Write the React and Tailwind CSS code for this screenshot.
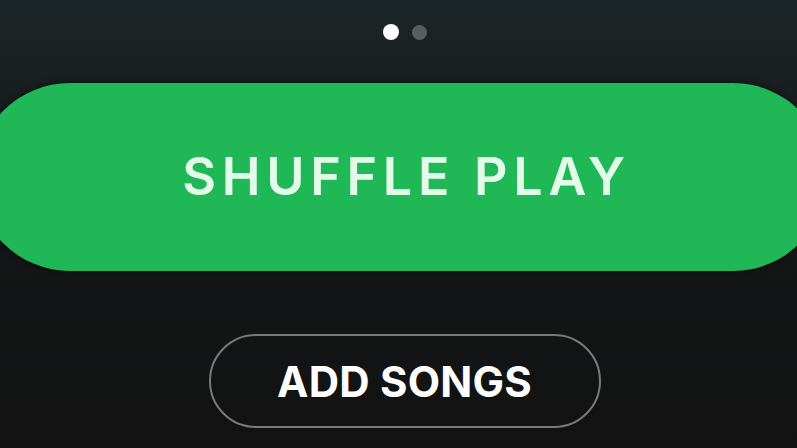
import React from 'react';

const PageDots = () => (
  <div className="ml-[12px] flex items-center justify-center gap-[13px] pt-[24px]">
    <span className="block h-[16px] w-[16px] rounded-full bg-white" />
    <span className="block h-[15px] w-[15px] rounded-full bg-[#5a5e5f]" />
  </div>
);

const App = () => {
  return (
    <div
      className="flex h-[448px] w-[797px] flex-col items-center overflow-hidden bg-gradient-to-b from-[#1c2527] via-[#141617] to-[#121212]"
      style={{ fontFamily: 'Inter, "Liberation Sans", sans-serif' }}
    >
      <PageDots />

      {/* Shuffle play */}
      <div className="ml-[6px] mt-[43px] flex h-[188px] w-[851px] shrink-0 items-center justify-center rounded-full bg-[#20b857] shadow-[0_0_6px_rgba(0,0,0,0.6)]">
        <span className="pl-[10px] text-[52px] font-semibold tracking-[0.11em] text-[#e3fbe9]">
          SHUFFLE PLAY
        </span>
      </div>

      {/* Add songs */}
      <div className="ml-[12px] mt-[63px] flex h-[94px] w-[392px] shrink-0 items-center justify-center rounded-full border-2 border-[#7a7a7a]">
        <span className="text-[42px] font-bold tracking-[0.005em] text-white">
          ADD SONGS
        </span>
      </div>
    </div>
  );
};

export default App;
